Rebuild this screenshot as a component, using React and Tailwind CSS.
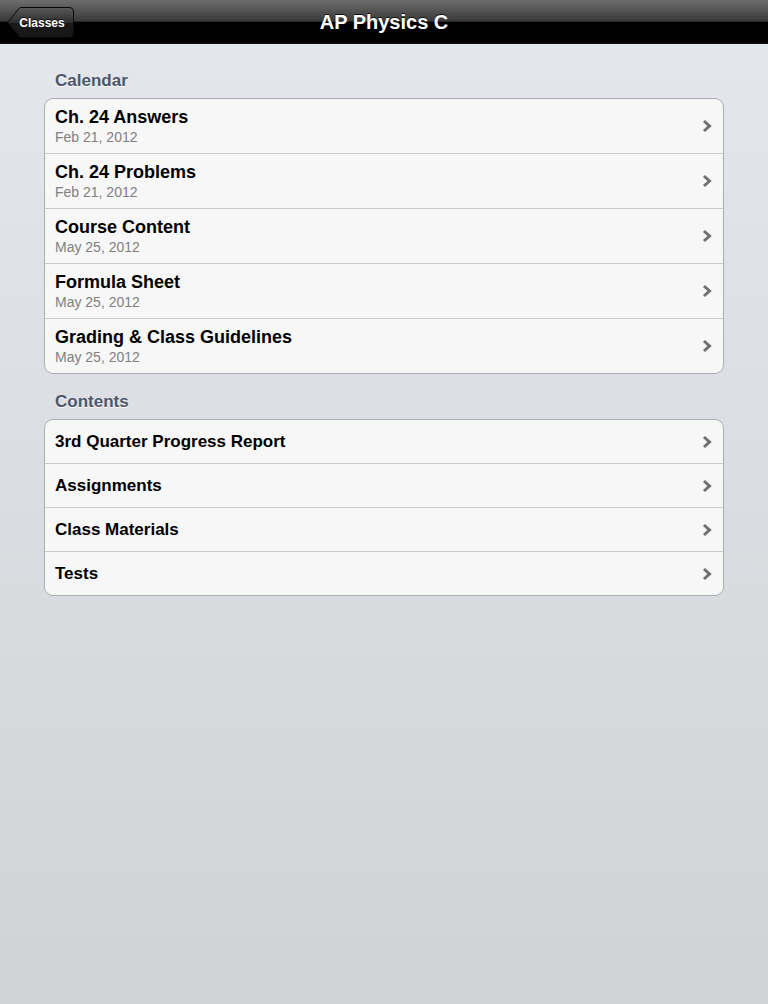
import React from "react";

const Chevron = () => (
  <svg width="10" height="14" viewBox="0 0 10 14" className="shrink-0">
    <path d="M2 2 L7.5 7 L2 12" fill="none" stroke="#707070" strokeWidth="3" strokeLinecap="butt" strokeLinejoin="miter" />
  </svg>
);

const calendar = [
  ["Ch. 24 Answers", "Feb 21, 2012"],
  ["Ch. 24 Problems", "Feb 21, 2012"],
  ["Course Content", "May 25, 2012"],
  ["Formula Sheet", "May 25, 2012"],
  ["Grading & Class Guidelines", "May 25, 2012"],
];

const contents = ["3rd Quarter Progress Report", "Assignments", "Class Materials", "Tests"];

export default function App() {
  return (
    <div
      className="w-[768px] h-[1004px] flex flex-col bg-[linear-gradient(to_bottom,#e4e7eb,#d0d2d6)]"
      style={{ fontFamily: '"Liberation Sans", Arial, Helvetica, sans-serif' }}
    >
      <div className="relative h-[44px] shrink-0 flex items-center justify-center bg-[linear-gradient(to_bottom,#6e6e6e_0%,#3a3a3a_48%,#262626_50%,#000_52%,#000_100%)] border-b border-[#111]">
        <div className="absolute left-[7px] top-[7px] w-[67px] h-[31px] flex items-center justify-center">
          <svg width="67" height="31" viewBox="0 0 67 31" className="absolute inset-0">
            <defs>
              <linearGradient id="bb" x1="0" y1="0" x2="0" y2="1">
                <stop offset="0" stopColor="#5a5a5a" />
                <stop offset="0.5" stopColor="#2e2e2e" />
                <stop offset="0.52" stopColor="#1a1a1a" />
                <stop offset="1" stopColor="#161616" />
              </linearGradient>
            </defs>
            <path
              d="M0.5 15.5 L12 1.5 Q12.5 0.5 14 0.5 L62 0.5 Q66.5 0.5 66.5 5 L66.5 26 Q66.5 30.5 62 30.5 L14 30.5 Q12.5 30.5 12 29.5 Z"
              fill="url(#bb)"
              stroke="#0a0a0a"
              strokeWidth="1"
            />
          </svg>
          <span className="relative pl-[3px] text-white text-[12px] font-bold [text-shadow:0_-1px_0_rgba(0,0,0,0.8)]">Classes</span>
        </div>
        <span className="text-white text-[20px] font-bold [text-shadow:0_-1px_0_rgba(0,0,0,0.8)]">AP Physics C</span>
      </div>

      <div className="flex flex-col px-[44px] pt-[27px]">
        <div className="pl-[11px] h-[27px] text-[17px] font-bold text-[#4c566c] leading-[20px] [text-shadow:0_1px_0_#fff]">Calendar</div>
        <div className="rounded-[9px] border border-[#abaeb3] bg-[#f7f7f7] overflow-hidden">
          {calendar.map(([t, d], i) => (
            <div
              key={t}
              className={`flex items-center pl-[10px] pr-[11px] ${i > 0 ? "border-t border-[#cbcbcb]" : ""} ${i === 0 ? "h-[54px]" : "h-[55px]"}`}
            >
              <div className="flex-1 flex flex-col">
                <span className="text-[18px] font-bold text-black leading-[21px]">{t}</span>
                <span className="text-[14px] text-[#808080] leading-[17px] mt-[1px]">{d}</span>
              </div>
              <Chevron />
            </div>
          ))}
        </div>

        <div className="pl-[11px] pt-[18px] h-[45px] text-[17px] font-bold text-[#4c566c] leading-[20px] [text-shadow:0_1px_0_#fff]">Contents</div>
        <div className="rounded-[9px] border border-[#abaeb3] bg-[#f7f7f7] overflow-hidden">
          {contents.map((t, i) => (
            <div
              key={t}
              className={`flex items-center pl-[10px] pr-[11px] ${i > 0 ? "border-t border-[#cbcbcb]" : ""} ${i === 0 ? "h-[43px]" : "h-[44px]"}`}
            >
              <span className="flex-1 text-[17px] font-bold text-black">{t}</span>
              <Chevron />
            </div>
          ))}
        </div>
      </div>
    </div>
  );
}
